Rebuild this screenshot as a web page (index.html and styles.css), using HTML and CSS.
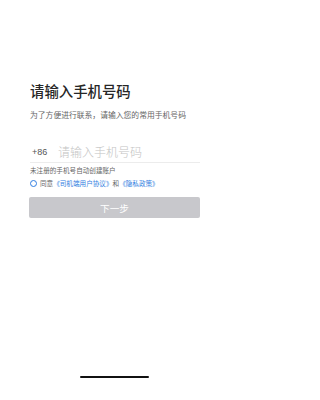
FILE: index.html
```html
<!DOCTYPE html>
<html lang="zh-CN">
<head>
<meta charset="utf-8">
<meta name="viewport" content="width=device-width, initial-scale=1">
<link rel="stylesheet" href="styles.css">
</head>
<body>
<div class="screen">
  <main class="content">
    <h1 class="title">请输入手机号码</h1>
    <p class="subtitle">为了方便进行联系，请输入您的常用手机号码</p>
    <div class="phone-row">
      <span class="code">+86</span>
      <span class="placeholder">请输入手机号码</span>
    </div>
    <p class="note">未注册的手机号自动创建账户</p>
    <div class="agree">
      <span class="radio"></span>
      <span class="agree-text">同意<a class="link">《司机端用户协议》</a>和<a class="link">《隐私政策》</a></span>
    </div>
    <button class="next" type="button">下一步</button>
  </main>
  <div class="home-indicator"></div>
</div>
</body>
</html>
```
FILE: styles.css
```css
* { box-sizing: border-box; }
html, body {
  margin: 0;
  padding: 0;
  background: #fff;
}
body {
  font-family: "Noto Sans CJK SC", "Noto Sans", sans-serif;
  color: #222;
}
.screen {
  width: 225px;
  height: 400px;
  display: flex;
  flex-direction: column;
}
.content {
  padding: 83px 25px 0 30px;
  display: flex;
  flex-direction: column;
}
.title {
  margin: 0;
  font-size: 14.4px;
  line-height: 16px;
  font-weight: 500;
  color: #262626;
}
.subtitle {
  margin: 11px 0 0;
  font-size: 7.8px;
  line-height: 10px;
  color: #666;
}
.phone-row {
  margin-top: 23px;
  height: 20px;
  display: flex;
  align-items: center;
  border-bottom: 0.6px solid #ececec;
  padding-bottom: 2px;
}
.code {
  font-family: "Liberation Sans", "Noto Sans", sans-serif;
  font-size: 9px;
  color: #555;
  width: 28px;
  padding-left: 2px;
}
.placeholder {
  font-size: 12px;
  line-height: 14px;
  font-weight: 300;
  color: #c4c4c4;
}
.note {
  margin: 3px 0 0;
  font-size: 6.6px;
  line-height: 9px;
  color: #666;
}
.agree {
  margin-top: 3px;
  display: flex;
  align-items: center;
  height: 10px;
}
.radio {
  width: 7px;
  height: 7px;
  border: 1px solid #2f7de1;
  border-radius: 50%;
  margin-right: 3px;
  flex: none;
}
.agree-text {
  font-size: 6.6px;
  line-height: 9px;
  color: #666;
}
.link {
  color: #2f7de1;
}
.next {
  margin-top: 9px;
  height: 21px;
  width: 171px;
  margin-left: -1px;
  border: none;
  border-radius: 2px;
  background: #c8c8cc;
  color: #fff;
  font-family: "Noto Sans CJK SC", sans-serif;
  font-size: 9.6px;
  padding: 0;
}
.home-indicator {
  margin: auto 0 22px 80px;
  width: 69px;
  height: 2px;
  border-radius: 1px;
  background: #111;
}
```
